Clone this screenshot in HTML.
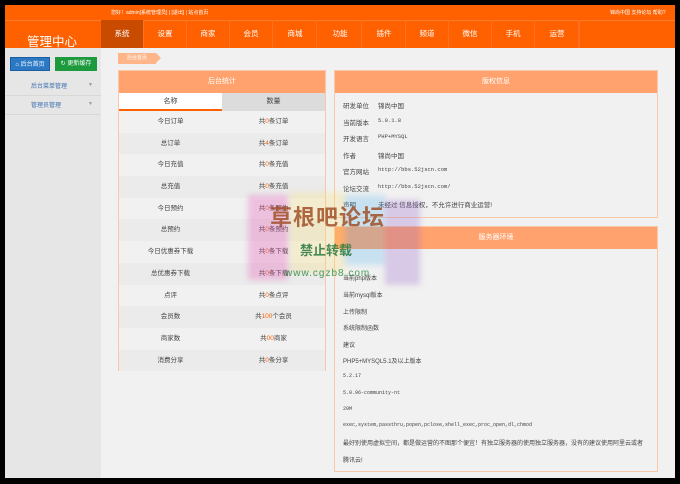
<!DOCTYPE html>
<html><head><meta charset="utf-8"><style>
*{margin:0;padding:0;box-sizing:border-box}
body{width:680px;height:484px;background:#000;font-family:"Liberation Sans","Noto Sans CJK SC",sans-serif;position:relative;overflow:hidden;font-size:7px;color:#444}
.abs{position:absolute}
#hdr{left:5px;top:5px;width:670px;height:43px;background:#ff6000}
#side{left:5px;top:48px;width:96px;height:430px;background:#e6e6e6}
#main{left:101px;top:48px;width:574px;height:430px;background:#f1f1f1}
.nav{top:20px;height:28px;width:43px;color:#fff;font-size:7.5px;text-align:center;line-height:28px;border-right:1px solid #ff7020}
.panel{background:#f1f1f1;border:1px solid #f8c8a8}
.ph{background:#ffa26d;color:#fff;text-align:center;height:22px;line-height:22px;font-size:7px}
.row{height:21.7px;line-height:21.7px;display:flex;font-size:6.5px}
.row div{flex:1;text-align:center}
.row:nth-child(even){background:#ebebeb}
.r{color:#ff6000}
.kv{position:absolute;left:8px;font-size:6.5px;color:#444}
.kv span{position:absolute;left:22px;white-space:nowrap}
.sl{position:absolute;left:8px;font-size:6px;white-space:nowrap;color:#444}
.blk{position:absolute;filter:blur(3px)}
</style></head><body>
<div id="hdr" class="abs"></div>
<div class="abs" style="left:5px;top:20px;width:670px;height:1px;background:#ff7a2a"></div>
<div class="abs" style="left:111px;top:9px;color:#fff;font-size:5px">您好！admin[系统管理员] | [退出] | 站点首页</div>
<div class="abs" style="left:610px;top:9px;color:#fff;font-size:5px">锦尚中国 支持论坛 帮助?</div>
<div class="abs" style="left:27px;top:31px;color:#fff;font-size:12.5px">管理中心</div>
<div class="abs nav" style="left:101px;background:#c94b00">系统</div>
<div class="abs nav" style="left:144px">设置</div>
<div class="abs nav" style="left:187px">商家</div>
<div class="abs nav" style="left:230px">会员</div>
<div class="abs nav" style="left:274px">商城</div>
<div class="abs nav" style="left:319px">功能</div>
<div class="abs nav" style="left:363px">插件</div>
<div class="abs nav" style="left:406px">频道</div>
<div class="abs nav" style="left:449px">微信</div>
<div class="abs nav" style="left:492px">手机</div>
<div class="abs nav" style="left:536px">运营</div>
<div class="abs nav" style="left:579px;width:1px;padding:0"></div>
<div id="side" class="abs"></div>
<div class="abs" style="left:10px;top:57px;width:40px;height:14px;background:#2b78c5;color:#fff;font-size:6px;line-height:14px;text-align:center;border:1px solid #1c5fa0">⌂ 后台首页</div>
<div class="abs" style="left:55px;top:57px;width:42px;height:14px;background:#1e9a3e;color:#fff;font-size:6px;line-height:14px;text-align:center">↻ 更新缓存</div>
<div class="abs" style="left:31px;top:81px;color:#3a6fb0;font-size:6px">后台菜单管理</div>
<div class="abs" style="left:88px;top:82px;color:#999;font-size:5px">▼</div>
<div class="abs" style="left:5px;top:95px;width:96px;height:1px;background:#d8d8d8"></div>
<div class="abs" style="left:31px;top:100px;color:#3a6fb0;font-size:6px">管理员管理</div>
<div class="abs" style="left:88px;top:101px;color:#999;font-size:5px">▼</div>
<div class="abs" style="left:5px;top:114px;width:96px;height:1px;background:#d8d8d8"></div>
<div id="main" class="abs"></div>
<div class="abs" style="left:118px;top:53px;width:38px;height:11px;background:#ffb58a;color:#fff;font-size:5px;line-height:11px;text-align:center">后台首页</div>
<div class="abs" style="left:156px;top:53px;width:0;height:0;border-top:5.5px solid transparent;border-bottom:5.5px solid transparent;border-left:5px solid #ffb58a"></div>

<div class="abs panel" style="left:118px;top:70px;width:208px;height:301px">
<div class="ph">后台统计</div>
<div style="display:flex;height:18px;line-height:17px;font-size:7px;text-align:center">
<div style="flex:1;background:#fff;border-bottom:2px solid #ff6000">名称</div>
<div style="flex:1;background:#dcdcdc">数量</div></div>
<div>
<div class="row"><div>今日订单</div><div>共<span class="r">0</span>条订单</div></div>
<div class="row"><div>总订单</div><div>共<span class="r">4</span>条订单</div></div>
<div class="row"><div>今日充值</div><div>共<span class="r">0</span>条充值</div></div>
<div class="row"><div>总充值</div><div>共<span class="r">0</span>条充值</div></div>
<div class="row"><div>今日预约</div><div>共<span class="r">0</span>条预约</div></div>
<div class="row"><div>总预约</div><div>共<span class="r">0</span>条预约</div></div>
<div class="row"><div>今日优惠券下载</div><div>共<span class="r">0</span>条下载</div></div>
<div class="row"><div>总优惠券下载</div><div>共<span class="r">0</span>条下载</div></div>
<div class="row"><div>点评</div><div>共<span class="r">0</span>条点评</div></div>
<div class="row"><div>会员数</div><div>共<span class="r">100</span>个会员</div></div>
<div class="row"><div>商家数</div><div>共<span class="r">00</span>商家</div></div>
<div class="row"><div>消费分享</div><div>共<span class="r">0</span>条分享</div></div>
</div></div>

<div class="abs panel" style="left:334px;top:70px;width:324px;height:148px">
<div class="ph">版权信息</div>
<div class="kv" style="top:29px">研发单位<span style="left:35px">锦尚中国</span></div>
<div class="kv" style="top:46px">当前版本<span style="left:35px;font-family:'Liberation Mono';font-size:5.5px">5.0.1.8</span></div>
<div class="kv" style="top:62px">开发语言<span style="left:35px;font-family:'Liberation Mono';font-size:5.5px">PHP+MYSQL</span></div>
<div class="kv" style="top:79px">作者<span style="left:35px">锦尚中国</span></div>
<div class="kv" style="top:95px">官方网站<span style="left:35px;font-family:'Liberation Mono';font-size:5.5px">http://bbs.52jscn.com</span></div>
<div class="kv" style="top:112px">论坛交流<span style="left:35px;font-family:'Liberation Mono';font-size:5.5px">http://bbs.52jscn.com/</span></div>
<div class="kv" style="top:128px">声明<span style="left:35px">未经过 信息授权，不允许进行商业运营!</span></div>
</div>

<div class="abs panel" style="left:334px;top:226px;width:324px;height:246px">
<div class="ph">服务器环境</div>
<div class="sl" style="top:46px">当前php版本</div>
<div class="sl" style="top:63px">当前mysql版本</div>
<div class="sl" style="top:80px">上传限制</div>
<div class="sl" style="top:96px">系统限制函数</div>
<div class="sl" style="top:113px">建议</div>
<div class="sl" style="top:129px">PHP5+MYSQL5.1及以上版本</div>
<div class="sl" style="top:146px;font-family:'Liberation Mono';font-size:5px">5.2.17</div>
<div class="sl" style="top:163px;font-family:'Liberation Mono';font-size:5px">5.0.96-community-nt</div>
<div class="sl" style="top:179px;font-family:'Liberation Mono';font-size:5px">20M</div>
<div class="sl" style="top:195px;font-family:'Liberation Mono';font-size:5px">exec,system,passthru,popen,pclose,shell_exec,proc_open,dl,chmod</div>
<div class="sl" style="top:211px">最好别使用虚拟空间，都是做运营的不图那个便宜！有独立服务器的使用独立服务器，没有的建议使用阿里云或者</div>
<div class="sl" style="top:228px">腾讯云!</div>
</div>

<div class="blk" style="left:248px;top:195px;width:40px;height:85px;background:rgba(230,80,180,.3)"></div>
<div class="blk" style="left:290px;top:192px;width:55px;height:80px;background:rgba(250,220,80,.22)"></div>
<div class="blk" style="left:345px;top:195px;width:40px;height:70px;background:rgba(80,180,240,.25)"></div>
<div class="blk" style="left:385px;top:200px;width:35px;height:85px;background:rgba(150,100,200,.28)"></div>
<div class="abs" style="left:270px;top:200px;color:rgba(160,80,40,.85);font-size:22px;font-weight:bold;letter-spacing:1px">草根吧论坛</div>
<div class="abs" style="left:300px;top:240px;color:rgba(40,120,60,.85);font-size:13px;font-weight:bold">禁止转载</div>
<div class="abs" style="left:285px;top:268px;color:rgba(40,140,60,.85);font-size:10px;letter-spacing:1px">www.cgzb8.com</div>
</body></html>
